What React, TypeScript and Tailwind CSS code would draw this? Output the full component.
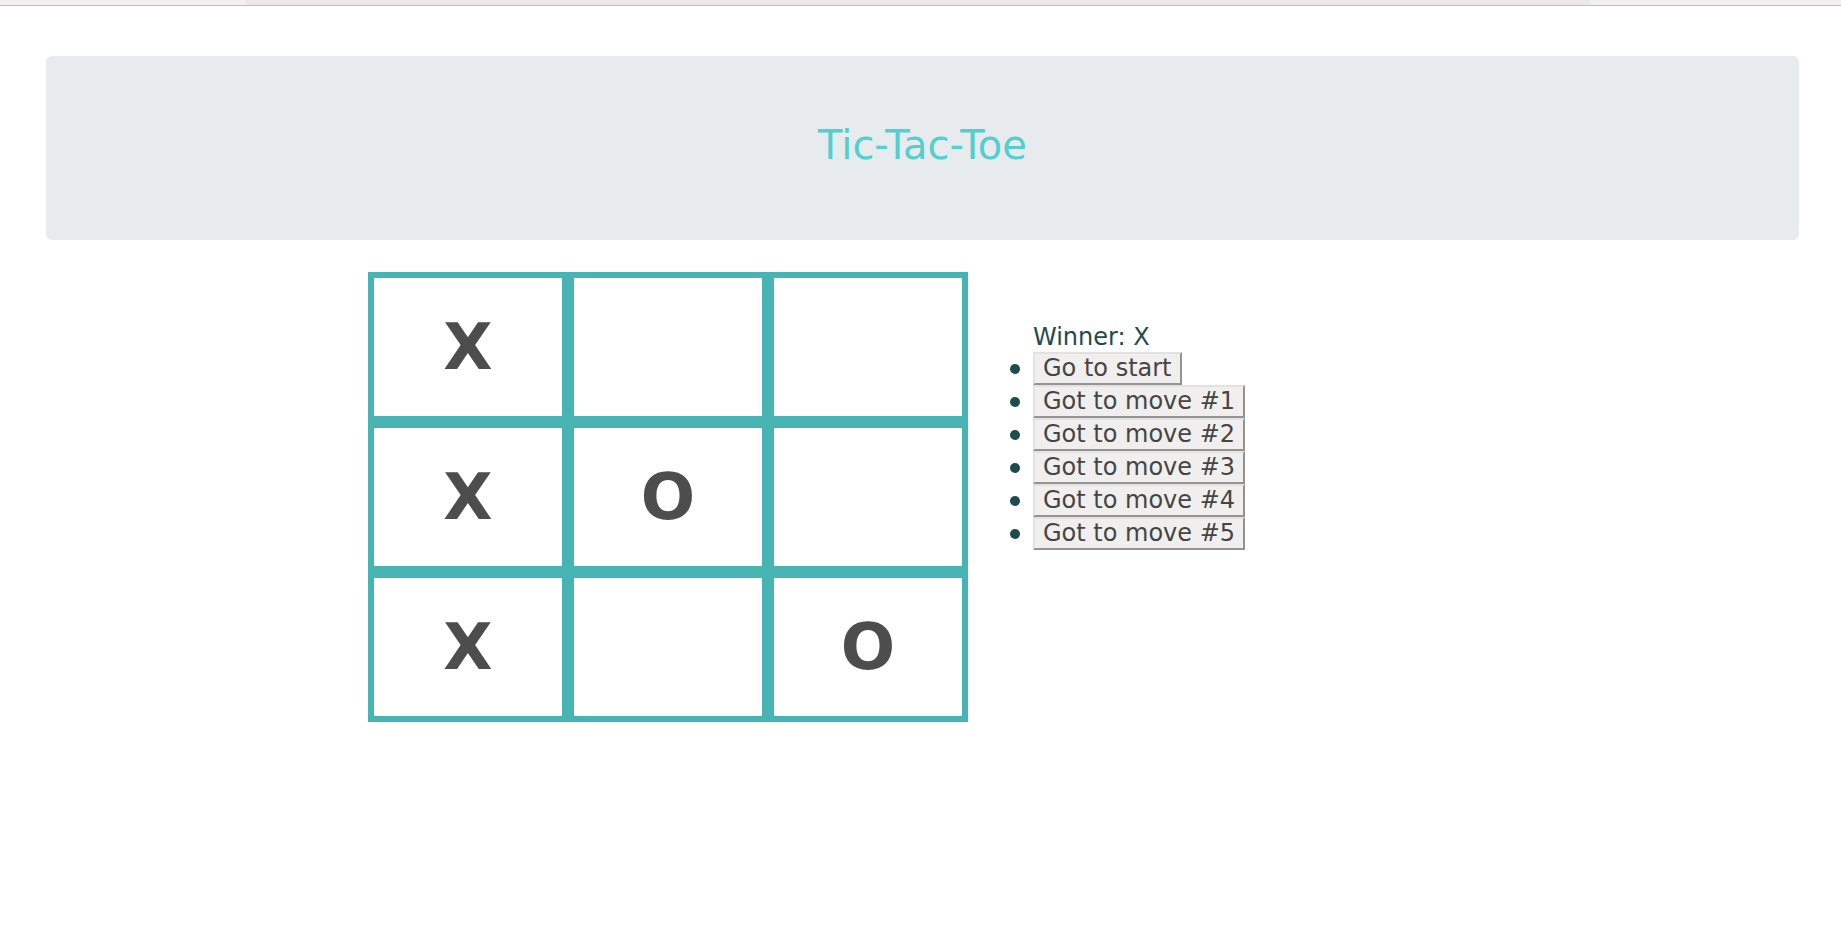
import React from "react";

const board: (string | null)[] = ["X", null, null, "X", "O", null, "X", null, "O"];
const moves = ["Go to start", "Got to move #1", "Got to move #2", "Got to move #3", "Got to move #4", "Got to move #5"];

export default function App() {
  return (
    <div className="min-h-[944px] bg-white" style={{ fontFamily: '"DejaVu Sans", Verdana, sans-serif' }}>
      <div className="h-[6px] bg-[#f2f1ef] border-b border-[#bfbfbf] flex">
        <div className="ml-[246px] w-[1344px] bg-[#eae9e7]" />
      </div>
      <div className="ml-[46px] mr-[42px] mt-[50px] h-[184px] rounded-[6px] bg-[#e8ebee] flex items-center justify-center pb-[6px]">
        <h1 className="text-[40px] text-[#52cfcf] font-normal leading-normal">Tic-Tac-Toe</h1>
      </div>
      <div className="flex mt-[32px] ml-[368px]">
        <div className="grid grid-cols-[repeat(3,200px)] grid-rows-[repeat(3,150px)]">
          {board.map((v, i) => (
            <div key={i} className="border-[6px] border-[#47b3b3] flex items-center justify-center">
              <span className="text-[64px] font-bold text-[#4d4d4d] leading-normal">{v ?? ""}</span>
            </div>
          ))}
        </div>
        <div className="ml-[25px] mt-[51px] text-[24px] text-[#1e4b4b] leading-[28px]">
          <div className="pl-[40px]">Winner: X</div>
          <ul className="list-none mt-px">
            {moves.map((m) => (
              <li key={m} className="h-[33px] flex items-center">
                <span className="ml-[17px] mr-[13px] w-[10px] h-[10px] rounded-full bg-[#1e4b4b] shrink-0" />
                <button className="h-[33px] px-[8px] leading-[27px] bg-[#f0efee] text-[#454545] border-2 border-t-[#e2e2e2] border-l-[#e2e2e2] border-b-[#939393] border-r-[#939393]">
                  {m}
                </button>
              </li>
            ))}
          </ul>
        </div>
      </div>
    </div>
  );
}
